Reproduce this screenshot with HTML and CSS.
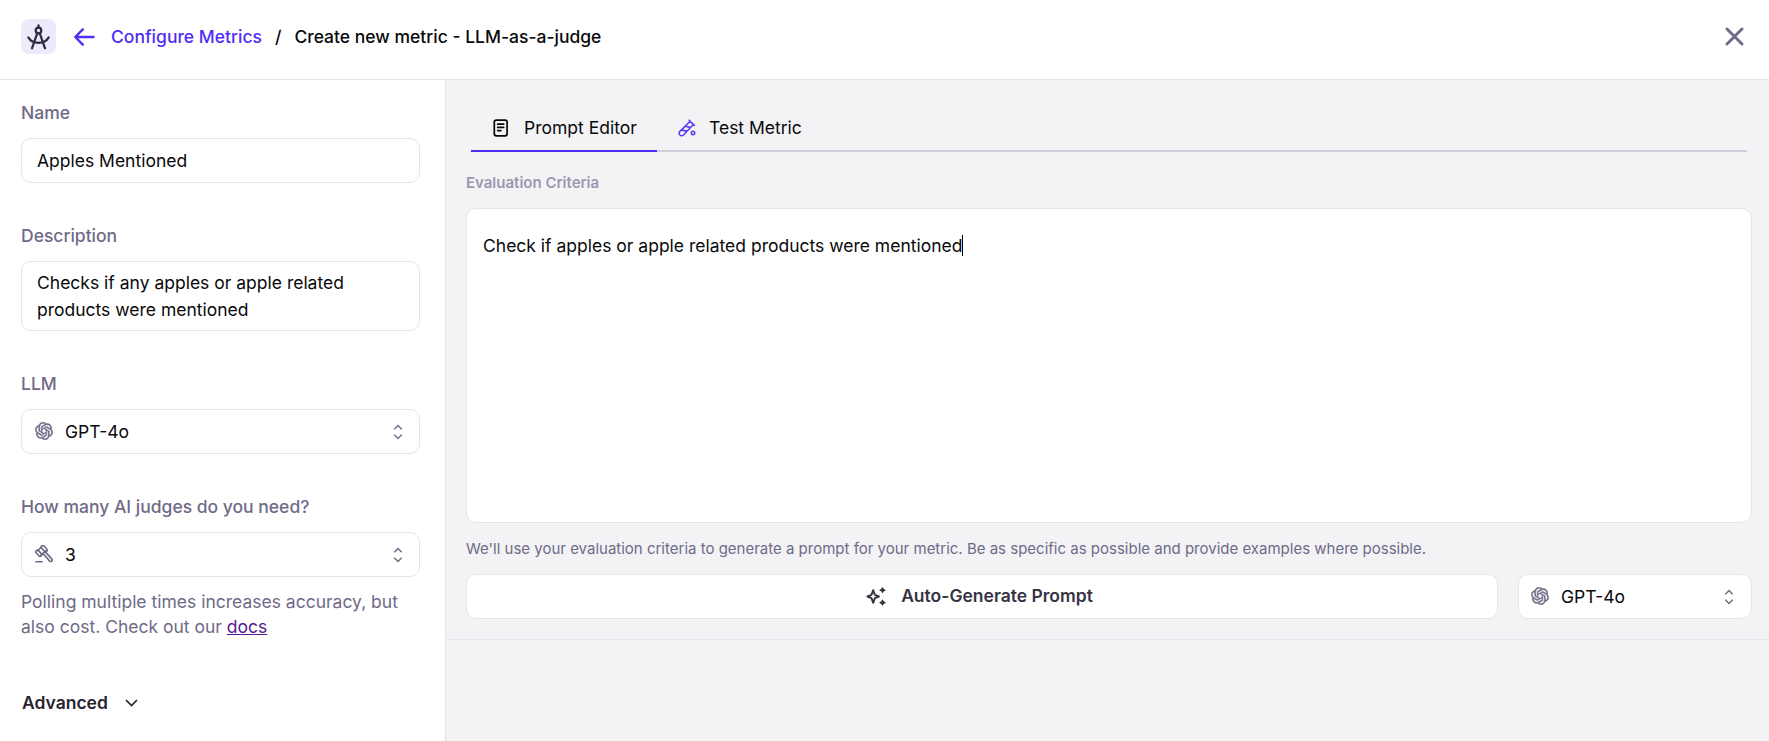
FILE: index.html
```html
<!DOCTYPE html>
<html lang="en">
<head>
<meta charset="utf-8">
<title>Create new metric</title>
<link rel="stylesheet" href="styles.css">
</head>
<body>
<svg class="defs" aria-hidden="true">
  <symbol id="openai" viewBox="-.3 -.3 24.600 24.600"><path fill="currentColor" stroke="currentColor" stroke-width=".7" d="M22.2819 9.8211a5.9847 5.9847 0 0 0-.5157-4.9108 6.0462 6.0462 0 0 0-6.5098-2.9A6.0651 6.0651 0 0 0 4.9807 4.1818a5.9847 5.9847 0 0 0-3.9977 2.9 6.0462 6.0462 0 0 0 .7427 7.0966 5.98 5.98 0 0 0 .511 4.9107 6.051 6.051 0 0 0 6.5146 2.9001A5.9847 5.9847 0 0 0 13.2599 24a6.0557 6.0557 0 0 0 5.7718-4.2058 5.9894 5.9894 0 0 0 3.9977-2.9001 6.0557 6.0557 0 0 0-.7475-7.0729zm-9.022 12.6081a4.4755 4.4755 0 0 1-2.8764-1.0408l.1419-.0804 4.7783-2.7582a.7948.7948 0 0 0 .3927-.6813v-6.7369l2.02 1.1686a.071.071 0 0 1 .038.052v5.5826a4.504 4.504 0 0 1-4.4945 4.4944zm-9.6607-4.1254a4.4708 4.4708 0 0 1-.5346-3.0137l.142.0852 4.783 2.7582a.7712.7712 0 0 0 .7806 0l5.8428-3.3685v2.3324a.0804.0804 0 0 1-.0332.0615L9.74 19.9502a4.4992 4.4992 0 0 1-6.1408-1.6464zM2.3408 7.8956a4.485 4.485 0 0 1 2.3655-1.9728V11.6a.7664.7664 0 0 0 .3879.6765l5.8144 3.3543-2.0201 1.1685a.0757.0757 0 0 1-.071 0l-4.8303-2.7865A4.504 4.504 0 0 1 2.3408 7.872zm16.5963 3.8558L13.1038 8.364 15.1192 7.2a.0757.0757 0 0 1 .071 0l4.8303 2.7913a4.4944 4.4944 0 0 1-.6765 8.1042v-5.6772a.79.79 0 0 0-.407-.667zm2.0107-3.0231l-.142-.0852-4.7735-2.7818a.7759.7759 0 0 0-.7854 0L9.409 9.2297V6.8974a.0662.0662 0 0 1 .0284-.0615l4.8303-2.7866a4.4992 4.4992 0 0 1 6.6802 4.66zM8.3065 12.863l-2.02-1.1638a.0804.0804 0 0 1-.038-.0567V6.0742a4.4992 4.4992 0 0 1 7.3757-3.4537l-.142.0805L8.704 5.459a.7948.7948 0 0 0-.3927.6813zm1.0976-2.3654l2.602-1.4998 2.6069 1.4998v2.9994l-2.5974 1.4997-2.6067-1.4997Z"/></symbol>
  <symbol id="updown" viewBox="0 0 10 16"><path d="M1.300 5.200 5 1.500 8.700 5.200M1.300 10.800 5 14.500 8.700 10.800" fill="none" stroke="currentColor" stroke-width="1.400"/></symbol>
</svg>

<header class="header">
  <span class="logo">
    <svg width="23" height="26" viewBox="0 0 23 26" fill="none" stroke="currentColor" stroke-width="2.200" stroke-linecap="round" stroke-linejoin="round">
      <path d="M11.500 1.300v2.200M10.200 9.300 5 24.300M12.800 9.300 18 24.300M1.300 13.400c4.200 7.200 16.200 7.200 20.400 0"/>
      <circle cx="11.500" cy="6.500" r="2.800"/>
    </svg>
  </span>
  <svg class="back" width="21" height="18" viewBox="0 0 21 18" fill="none" stroke="currentColor" stroke-width="2.400" stroke-linecap="round" stroke-linejoin="round"><path d="M19.500 9H1.500M8.800 1.400 1.300 9l7.500 7.600"/></svg>
  <nav class="crumbs"><a class="crumb-link">Configure Metrics</a><span class="slash">/</span><span>Create new metric - LLM-as-a-judge</span></nav>
  <svg class="close" width="19" height="19" viewBox="0 0 19 19" fill="none" stroke="currentColor" stroke-width="2.900" stroke-linecap="round"><path d="m2 2 15 15M17 2 2 17"/></svg>
</header>

<div class="body">
  <aside class="sidebar">
    <section class="field">
      <label class="label">Name</label>
      <div class="box input">Apples Mentioned</div>
    </section>
    <section class="field">
      <label class="label">Description</label>
      <div class="box textarea">Checks if any apples or apple related products were mentioned</div>
    </section>
    <section class="field">
      <label class="label">LLM</label>
      <div class="box select"><svg class="lead"><use href="#openai"/></svg><span>GPT-4o</span><svg class="updown"><use href="#updown"/></svg></div>
    </section>
    <section class="field">
      <label class="label">How many AI judges do you need?</label>
      <div class="box select">
        <svg class="lead" viewBox="0 0 18 18" fill="none" stroke="currentColor" stroke-width="1.600" stroke-linecap="round" stroke-linejoin="round">
          <path d="M1 16.800h6.200M2.600 5.600l4-3.600M5.700 10.300l5-4.500"/>
          <rect x="-1.600" y="-3.600" width="3.200" height="7.200" rx="1.600" transform="translate(3.700 8.200) rotate(-42)"/>
          <rect x="-1.600" y="-3.600" width="3.200" height="7.200" rx="1.600" transform="translate(9.200 3.600) rotate(-42)"/>
          <path d="m8 8.500 6.700 7.600a1.500 1.500 0 0 0 2.200-2L10.100 6.600"/>
        </svg>
        <span>3</span><svg class="updown"><use href="#updown"/></svg></div>
      <p class="hint">Polling multiple times increases accuracy, but also cost. Check out our <a class="docs">docs</a></p>
    </section>
    <div class="advanced"><span>Advanced</span><svg width="13" height="8" viewBox="0 0 13 8" fill="none" stroke="currentColor" stroke-width="1.700"><path d="m1 1 5.500 5.500L12 1"/></svg></div>
  </aside>

  <main class="main">
    <section class="editor">
      <div class="tabs">
        <div class="tab active">
          <svg width="16" height="18" viewBox="0 0 16 18" fill="none" stroke="currentColor" stroke-width="1.700" stroke-linecap="round"><rect x="1.300" y="1.200" width="12.800" height="15.600" rx="2"/><path d="M4.700 5.200h6M4.700 8.400h6M4.700 11.600h3.200"/></svg>
          <span>Prompt Editor</span>
        </div>
        <div class="tab">
          <svg class="tube" width="18" height="18" viewBox="0 0 18 18" fill="none" stroke="currentColor" stroke-width="1.600" stroke-linecap="round" stroke-linejoin="round"><path d="m11.100 1.200 5.200 5.200M12.200 2.300 1.900 12.400a2.500 2.500 0 0 0 3.600 3.600L15.400 5.500M7.500 7.200l4.900 1.200M3.600 11.100l5.500 1"/><circle cx="15" cy="14" r="1.700"/></svg>
          <span>Test Metric</span>
        </div>
      </div>
      <div class="criteria">Evaluation Criteria</div>
      <div class="box prompt"><span>Check if apples or apple related products were mentioned</span><i class="caret"></i></div>
      <p class="help">We'll use your evaluation criteria to generate a prompt for your metric. Be as specific as possible and provide examples where possible.</p>
      <div class="actions">
        <button class="box generate">
          <svg width="20" height="19" viewBox="0 0 20 19" fill="none" stroke="currentColor" stroke-width="1.900" stroke-linejoin="round"><path d="M7.200 3.200 8.900 7.800 13 9.500 8.900 11.200 7.200 15.800 5.500 11.200 1.400 9.500 5.500 7.800Z"/><path fill="currentColor" stroke-width="1.200" d="m16.500.9.8 1.500 1.700.8-1.700.8-.8 1.500-.8-1.500-1.700-.8 1.700-.8ZM16.500 13.300l.8 1.500 1.700.8-1.700.8-.8 1.500-.8-1.500-1.700-.8 1.700-.8Z"/></svg>
          <span>Auto-Generate Prompt</span>
        </button>
        <div class="box select model"><svg class="lead"><use href="#openai"/></svg><span>GPT-4o</span><svg class="updown"><use href="#updown"/></svg></div>
      </div>
    </section>
  </main>
</div>
</body>
</html>
```
FILE: styles.css
```css
* { box-sizing: border-box; }
body { margin: 0; height: 741px; overflow: hidden; display: flex; flex-direction: column; background: #fff; color: #09090b; font: 400 17.500px/27px Inter, sans-serif; }
p { margin: 0; }
svg { display: block; flex: none; }
.defs { position: absolute; width: 0; height: 0; }

.header { height: 80px; flex: none; display: flex; align-items: flex-start; padding: 19px 25px 0 21px; border-bottom: 1px solid #e4e4e7; }
.logo { width: 35px; height: 35px; border-radius: 8px; background: #edeafc; color: #2f2b3d; display: grid; place-items: center; }
.back { margin: 9px 0 0 18px; color: #4f2df5; }
.crumbs { display: flex; margin: 4px 0 0 16px; font-weight: 500; }
.crumb-link { color: #4f2df5; }
.slash { margin: 0 13px; }
.close { margin: 8px 0 0 auto; color: #6f6a87; }

.body { flex: 1; display: flex; min-height: 0; }
.sidebar { width: 446px; flex: none; border-right: 1px solid #e4e4e7; padding: 20px 25px 0 21px; }
.field { margin-bottom: 40px; }
.label { display: block; height: 38px; line-height: 26px; font-weight: 500; color: #6f6a87; }
.box { background: #fff; border: 1px solid #e5e5ea; border-radius: 10px; }
.input { height: 45px; padding: 8px 15px; }
.textarea { height: 70px; padding: 7px 60px 0 15px; }
.select { height: 45px; display: flex; align-items: center; padding: 0 16px 0 13px; }
.lead { width: 18px; height: 18px; color: #6f6a87; margin: 0 12px 1px 0; }
.updown { width: 10px; height: 16px; color: #6f6a87; margin-left: auto; }
.hint { color: #6f6a87; line-height: 25px; margin-top: 12px; }
.docs { color: #551a8b; text-decoration: underline; }
.advanced { display: flex; align-items: center; gap: 17px; margin-top: 50px; padding-left: 1px; font-weight: 600; color: #27242f; }

.main { flex: 1; background: #f3f3f6; min-width: 0; }
.editor { height: 560px; padding: 26px 17px 0 20px; border-bottom: 1px solid #e5e5ea; }
.tabs { display: flex; height: 46px; margin: 0 5px; border-bottom: 2px solid #d1cfdb; }
.tab { display: flex; height: 46px; gap: 13px; padding: 8px 20px 0 21px; color: #09090b; white-space: nowrap; }
.tab svg { margin-top: 5px; }
.tab.active { width: 186px; gap: 15px; padding-left: 22px; border-bottom: 2px solid #4f2df5; }
.tube { color: #5b3df5; }
.criteria { margin-top: 17px; height: 39px; line-height: 27px; font-size: 15px; font-weight: 600; color: #9c98b0; }
.prompt { height: 315px; padding: 23px 16px; display: flex; }
.caret { width: 1px; height: 21px; background: #000; margin-top: 3px; }
.help { height: 51px; padding-top: 13px; font-size: 15px; line-height: 26px; color: #6f6a87; }
.actions { display: flex; gap: 20px; }
.generate { flex: 1; height: 45px; padding: 0 5px 0 0; display: flex; align-items: center; justify-content: center; gap: 15px; font: 600 17.500px/27px Inter, sans-serif; color: #363342; }
.generate span { padding-bottom: 2px; }
.model { width: 234px; padding: 0 17px 0 12px; }
```
